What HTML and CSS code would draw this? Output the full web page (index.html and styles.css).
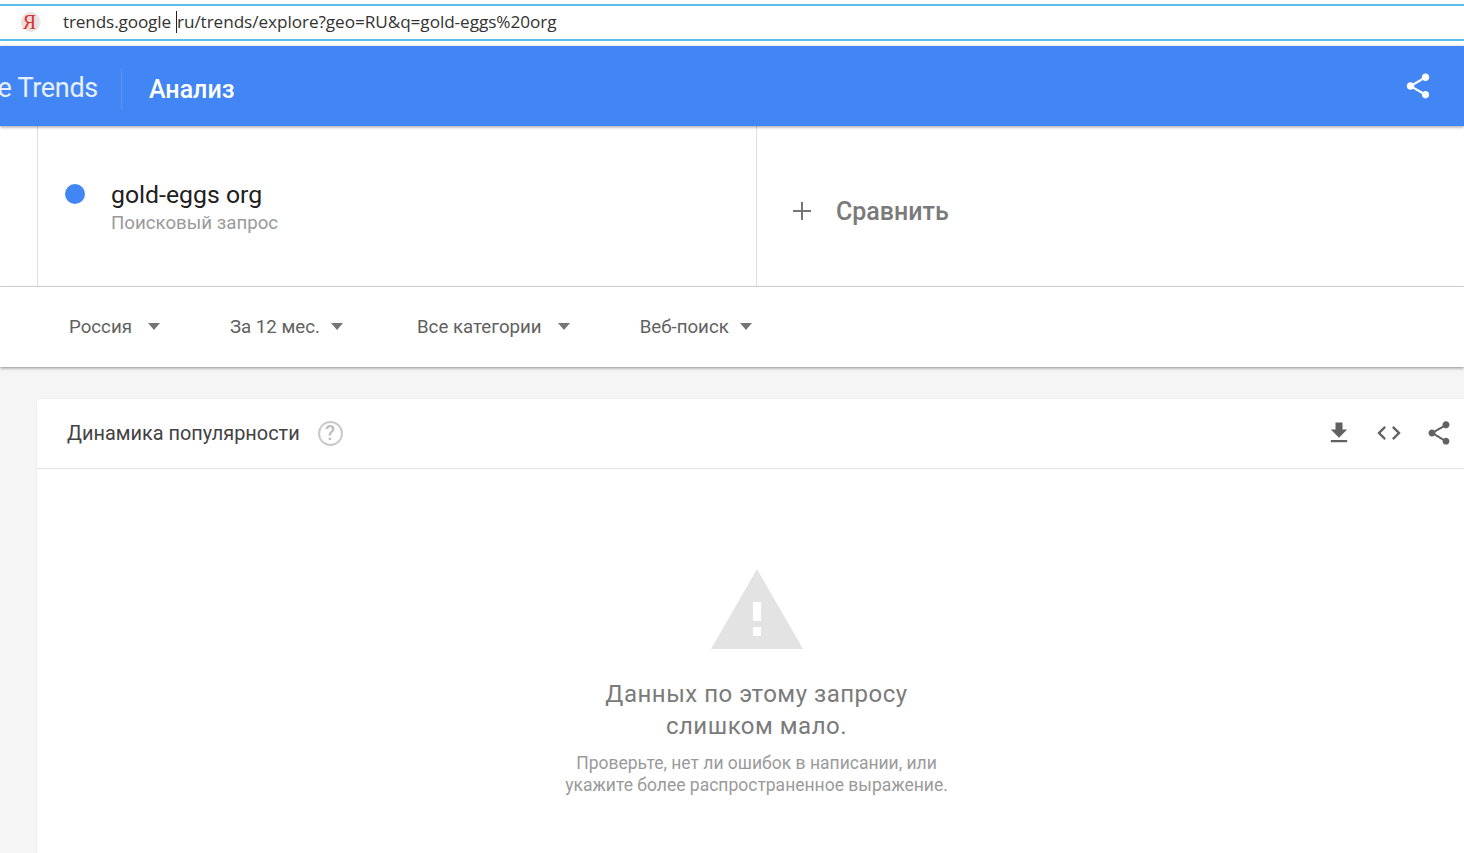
FILE: index.html
```html
<!DOCTYPE html>
<html lang="ru">
<head>
<meta charset="utf-8">
<title>Google Trends</title>
<link rel="stylesheet" href="styles.css">
</head>
<body>
<div class="urlbar">
  <span class="ya"><span class="ya-letter">Я</span></span>
  <span class="url"><span class="host">trends.google</span><span class="caret"></span><span>ru/trends/explore?geo=RU&amp;q=gold-eggs%20org</span></span>
</div>
<header class="appbar">
  <div class="brand"><span>Google Trends</span></div>
  <div class="section">Анализ</div>
  <svg class="appshare" viewBox="0 0 24 24"><path d="M18 16.08c-.76 0-1.44.3-1.96.77L8.91 12.7c.05-.23.09-.46.09-.7s-.04-.47-.09-.7l7.05-4.11c.54.5 1.25.81 2.04.81 1.66 0 3-1.34 3-3s-1.34-3-3-3-3 1.34-3 3c0 .24.04.47.09.7L8.04 9.81C7.5 9.31 6.79 9 6 9c-1.66 0-3 1.34-3 3s1.34 3 3 3c.79 0 1.5-.31 2.04-.81l7.12 4.16c-.05.21-.08.43-.08.65 0 1.61 1.31 2.92 2.92 2.92s2.92-1.31 2.92-2.92-1.31-2.92-2.92-2.92z"/></svg>
</header>
<section class="terms">
  <div class="term">
    <span class="dot"></span>
    <div>
      <div class="term-name">gold-eggs org</div>
      <div class="term-type">Поисковый запрос</div>
    </div>
  </div>
  <div class="compare">
    <svg class="plus" viewBox="0 0 18 18"><path d="M8 0h2v8h8v2h-8v8H8v-8H0V8h8z"/></svg>
    <span>Сравнить</span>
  </div>
</section>
<nav class="filters">
  <div class="filter f1">Россия<i class="arrow"></i></div>
  <div class="filter f2">За 12 мес.<i class="arrow"></i></div>
  <div class="filter f3">Все категории<i class="arrow"></i></div>
  <div class="filter f4">Веб-поиск<i class="arrow"></i></div>
</nav>
<main class="content">
  <article class="card">
    <div class="card-head">
      <h2>Динамика популярности</h2>
      <span class="help">?</span>
      <div class="tools">
        <svg class="tool" viewBox="0 0 24 24"><path d="M19 9h-4V3H9v6H5l7 7 7-7zM5 18v2h14v-2H5z"/></svg>
        <svg class="tool code" viewBox="0 0 24 24"><path d="M9.4 16.6 4.8 12l4.6-4.6L8 6l-6 6 6 6 1.4-1.4zm5.2 0 4.6-4.6-4.6-4.6L16 6l6 6-6 6-1.4-1.4z"/></svg>
        <svg class="tool share" viewBox="0 0 24 24"><path d="M18 16.08c-.76 0-1.44.3-1.96.77L8.91 12.7c.05-.23.09-.46.09-.7s-.04-.47-.09-.7l7.05-4.11c.54.5 1.25.81 2.04.81 1.66 0 3-1.34 3-3s-1.34-3-3-3-3 1.34-3 3c0 .24.04.47.09.7L8.04 9.81C7.5 9.31 6.79 9 6 9c-1.66 0-3 1.34-3 3s1.34 3 3 3c.79 0 1.5-.31 2.04-.81l7.12 4.16c-.05.21-.08.43-.08.65 0 1.61 1.31 2.92 2.92 2.92s2.92-1.31 2.92-2.92-1.31-2.92-2.92-2.92z"/></svg>
      </div>
    </div>
    <div class="empty">
      <svg class="warn" viewBox="0 0 92 80"><path fill-rule="evenodd" d="M46 0 92 80H0zM42 33v19h8V33zm0 25v9h8v-9z"/></svg>
      <p class="empty-title">Данных по этому запросу<br>слишком мало.</p>
      <p class="empty-text">Проверьте, нет ли ошибок в написании, или<br>укажите более распространенное выражение.</p>
    </div>
  </article>
</main>
</body>
</html>
```
FILE: styles.css
```css
* { box-sizing: border-box; }
html, body { margin: 0; height: 853px; overflow: hidden; background: #fff; }
body { font-family: Roboto, "Noto Sans", sans-serif; }

.urlbar {
  margin-top: 4px;
  height: 37px;
  border-top: 2px solid #5bbdee;
  border-bottom: 2px solid #5bbdee;
  display: flex;
  align-items: center;
  padding: 0 0 2px 21px;
  background: #fff;
}
.ya {
  width: 20px; height: 20px; border-radius: 50%;
  background: radial-gradient(circle at 35% 50%, #f3dcdc 30%, #e4e4e4 60%, #f4f4f4 85%);
  display: flex; align-items: center; justify-content: center;
  margin-right: 22px;
}
.ya-letter { color: #d8342c; font: 20px/20px "Liberation Serif", serif; margin-right: 3px; }
.url { font-family: "Open Sans", sans-serif; font-size: 17.2px; line-height: 24px; color: #333; display: flex; align-items: center; letter-spacing: -0.07px; white-space: nowrap; }
.host { letter-spacing: -0.15px; }
.caret { display: inline-block; width: 1px; height: 22px; background: #222; margin: 0 0 0 5px; }

.appbar {
  margin-top: 5px;
  height: 80px;
  background: #4285f4;
  box-shadow: 0 1px 3px rgba(0,0,0,.4);
  display: flex;
  align-items: center;
  position: relative;
  color: #fff;
}
.brand {
  width: 122px; height: 42px; margin-top: 6px; padding-bottom: 2px;
  border-right: 1px solid #5a94f5;
  display: flex; justify-content: flex-end; align-items: center;
  overflow: hidden;
  padding-right: 23px;
  font-size: 27px; letter-spacing: -0.3px; white-space: nowrap; color: #e8f0fe;
  flex: none;
}
.section { margin-left: 27px; font-size: 25px; font-weight: 500; margin-top: 7px; }
.appshare { width: 30px; height: 30px; fill: #fff; margin-left: auto; margin-right: 31px; }

.terms { height: 161px; display: flex; border-bottom: 1px solid #e0e0e0; }
.term {
  margin-left: 37px; width: 720px;
  border-left: 1px solid #e0e0e0; border-right: 1px solid #e0e0e0;
  display: flex; padding: 54px 0 0 27px;
}
.dot { width: 20px; height: 20px; border-radius: 50%; background: #4285f4; margin: 4px 26px 0 0; flex: none; }
.term-name { font-size: 24.8px; line-height: 30px; color: #212121; }
.term-type { font-size: 18.7px; line-height: 24px; color: #9a9a9a; margin-top: 1px; }
.compare { display: flex; align-items: center; padding: 10px 0 0 36px; color: #7a7a7a; font-size: 25px; font-weight: 500; height: 100%; }
.plus { width: 18px; height: 18px; fill: #757575; margin-right: 25px; }

.filters {
  height: 80px; display: flex; align-items: center;
  background: #fff; box-shadow: 0 1px 3px rgba(0,0,0,.45); position: relative;
  font-size: 18.7px; color: #616161; padding: 0 0 1px 69px;
}
.filter { display: flex; align-items: center; white-space: nowrap; }
.arrow { width: 0; height: 0; border: 6.5px solid transparent; border-top: 7px solid #757575; border-bottom: 0; margin-top: 0; }
.f1 .arrow { margin-left: 16px; }
.f2 { margin-left: 70px; }
.f2 .arrow { margin-left: 11px; }
.f3 { margin-left: 74px; }
.f3 .arrow { margin-left: 16px; }
.f4 { margin-left: 70px; }
.f4 .arrow { margin-left: 11px; }

.content { background: #f5f5f5; height: 487px; padding: 32px 0 0 37px; }
.card { background: #fff; height: 100%; border-radius: 3px 0 0 0; box-shadow: 0 0 2px rgba(0,0,0,.08); }
.card-head { height: 70px; display: flex; align-items: center; padding: 0 0 1px 30px; border-bottom: 1px solid #e4e4e4; }
.card-head h2 { margin: 0; font-size: 19.9px; font-weight: 400; color: #424242; }
.help {
  width: 25px; height: 25px; border: 2px solid #c9c9c9; border-radius: 50%; margin-left: 18px;
  color: #bdbdbd; font-size: 20px; font-weight: 500;
  display: flex; align-items: center; justify-content: center;
}
.tools { margin-left: auto; display: flex; align-items: center; gap: 22px; margin-right: 11px; }
.tool { width: 28px; height: 28px; fill: #616161; }

.empty { display: flex; flex-direction: column; align-items: center; padding: 100px 0 0 12px; }
.warn { width: 92px; height: 80px; fill: #e3e3e3; }
.empty-title { margin: 29px 0 0; text-align: center; font-size: 24px; line-height: 32px; color: #7b7b7b; letter-spacing: .5px; }
.empty-text { margin: 10px 0 0; text-align: center; font-size: 17.5px; line-height: 22px; color: #9a9a9a; }
```
